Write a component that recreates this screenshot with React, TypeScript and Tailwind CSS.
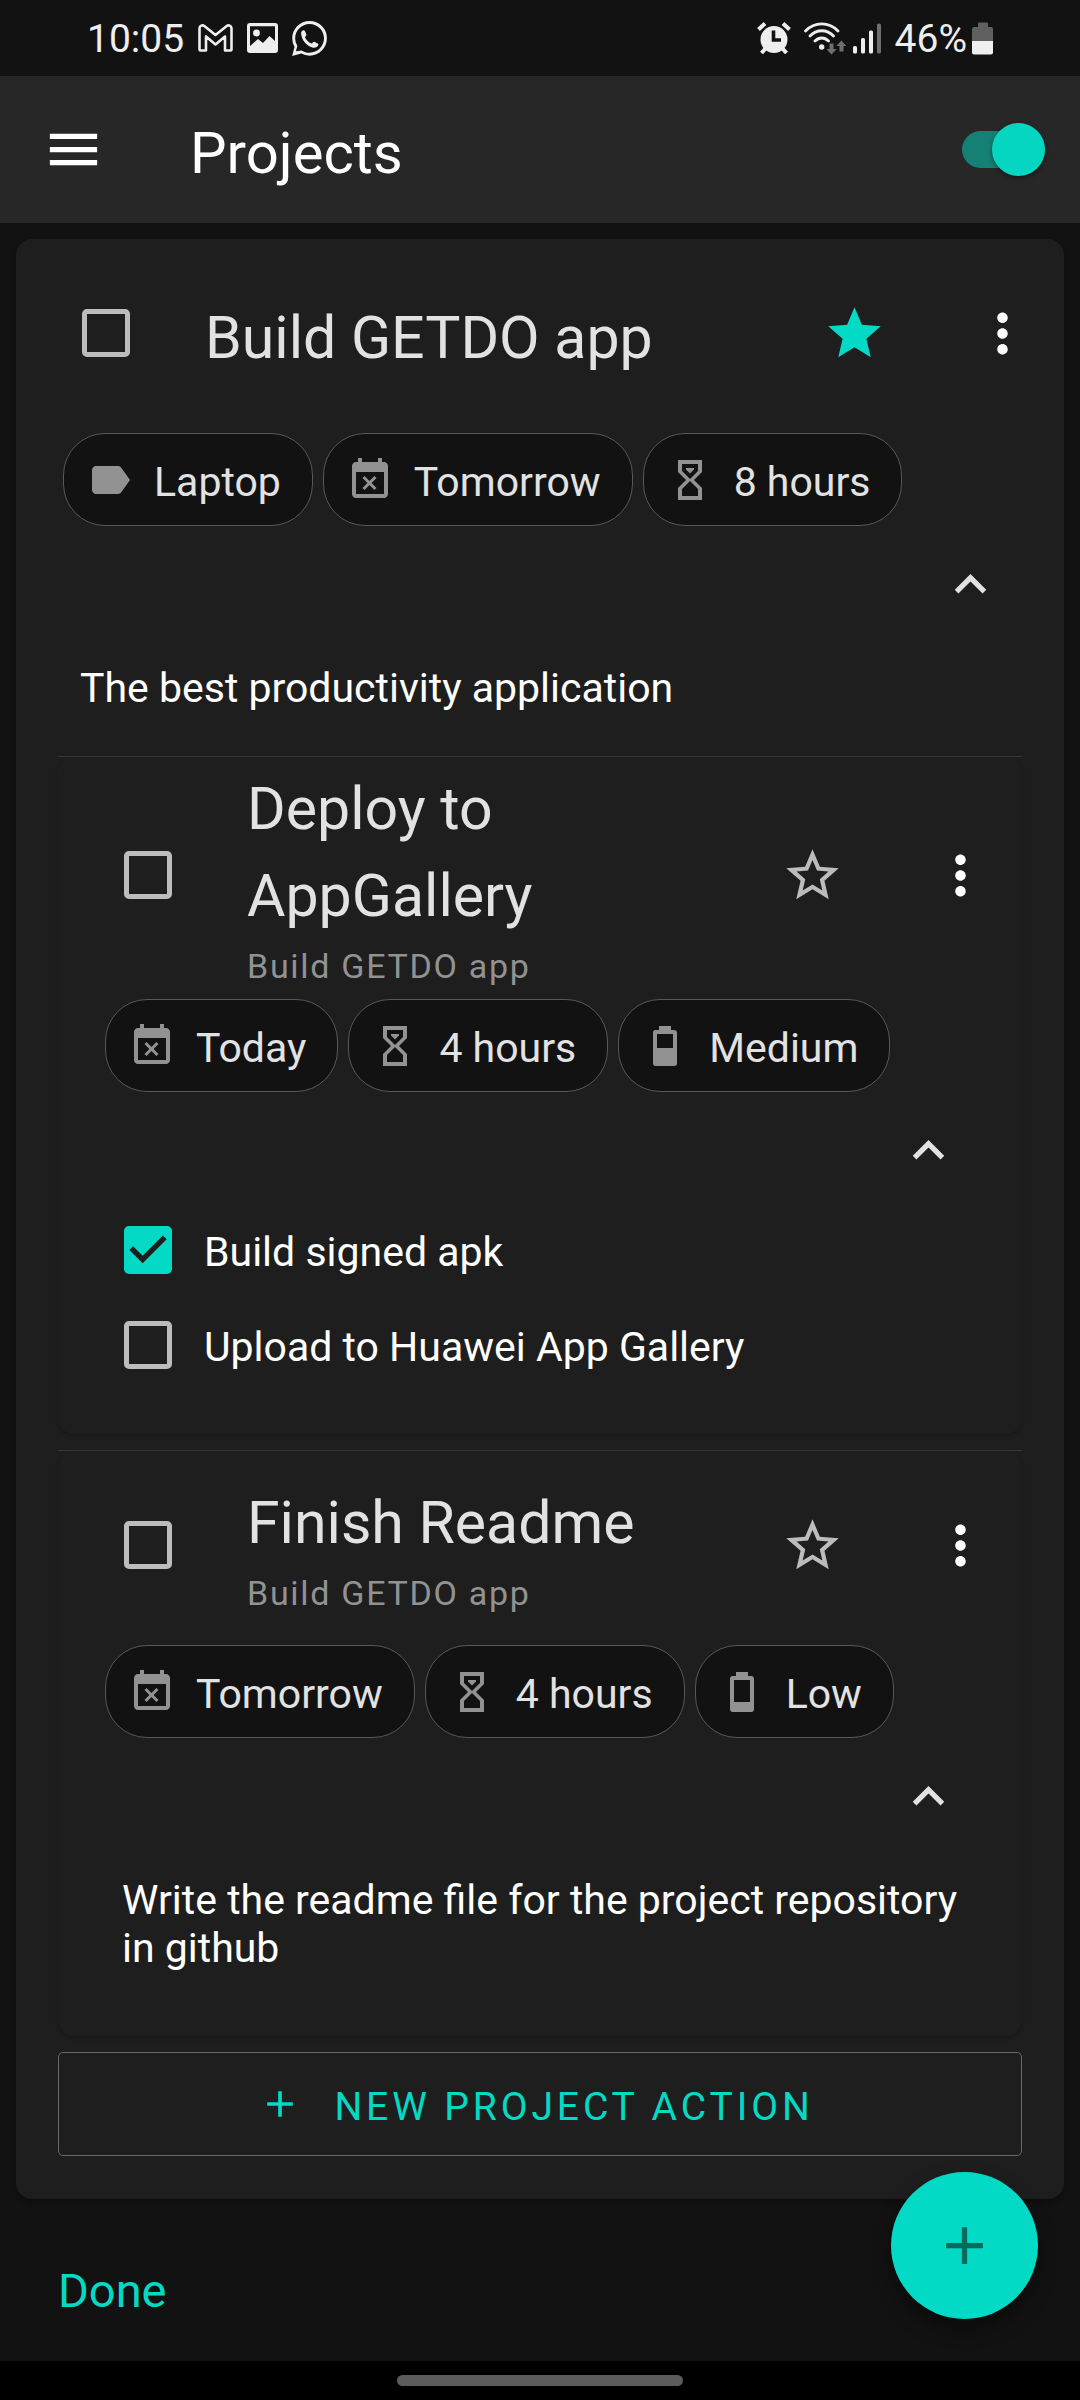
import { useState, type ReactNode } from "react";

const STAR_FILLED =
  "M12 17.27 18.18 21l-1.64-7.03L22 9.24l-7.19-.61L12 2 9.19 8.63 2 9.24l5.46 4.73L5.82 21z";
const STAR_OUTLINE =
  "m22 9.24-7.19-.62L12 2 9.19 8.63 2 9.24l5.46 4.73L5.82 21 12 17.27 18.18 21l-1.63-7.03L22 9.24zM12 15.4l-3.76 2.27 1-4.28-3.32-2.88 4.38-.38L12 6.1l1.71 4.04 4.38.38-3.32 2.88 1 4.28L12 15.4z";
const BATTERY_BODY =
  "M16.67,4H15V2H9V4H7.33A1.33,1.33 0 0,0 6,5.33V20.67C6,21.4 6.6,22 7.33,22H16.67A1.33,1.33 0 0,0 18,20.67V5.33C18,4.6 17.4,4 16.67,4Z";

const CHIP_ICONS = {
  label:
    "M17.63 5.84C17.27 5.33 16.67 5 16 5L5 5.01C3.9 5.01 3 5.9 3 7v10c0 1.1.9 1.99 2 1.99L16 19c.67 0 1.27-.33 1.63-.84L22 12l-4.37-6.16z",
  calendar:
    "M9.31 17l2.44-2.44L14.19 17l1.06-1.06-2.44-2.44 2.44-2.44L14.19 10l-2.44 2.44L9.31 10l-1.06 1.06 2.44 2.44-2.44 2.44L9.31 17zM19 3h-1V1h-2v2H8V1H6v2H5c-1.11 0-1.99.9-1.99 2L3 19c0 1.1.89 2 2 2h14c1.1 0 2-.9 2-2V5c0-1.1-.9-2-2-2zm0 16H5V8h14v11z",
  hourglass:
    "M6,2H18V8L14,12L18,16V22H6V16L10,12L6,8V2M16,16.5L12,12.5L8,16.5V20H16V16.5M12,11.5L16,7.5V4H8V7.5L12,11.5M10,6H14V6.75L12,8.75L10,6.75V6Z",
  batteryMedium: "M16,13H8V6H16Z" + BATTERY_BODY,
  batteryLow: "M16,17H8V6H16Z" + BATTERY_BODY,
};

type ChipData = { icon: keyof typeof CHIP_ICONS; text: string };

function Icon({ d, className }: { d: string; className: string }) {
  return (
    <svg viewBox="0 0 24 24" fill="currentColor" fillRule="evenodd" className={className} aria-hidden="true">
      <path d={d} />
    </svg>
  );
}

function Checkbox({ id, label, initial = false }: { id: string; label?: string; initial?: boolean }) {
  const [checked, setChecked] = useState(initial);
  return (
    <span className="relative size-12 shrink-0">
      <input
        id={id}
        type="checkbox"
        aria-label={label}
        checked={checked}
        onChange={(e) => setChecked(e.target.checked)}
        className="block size-12 appearance-none rounded-[5px] border-[5px] border-[#bcbcbc] checked:border-[#03dac5] checked:bg-[#03dac5]"
      />
      {checked && (
        <svg viewBox="3 3 18 18" className="pointer-events-none absolute inset-0 size-12" aria-hidden="true">
          <path d="M10 17l-5-5 1.41-1.41L10 14.17l7.59-7.59L19 8z" fill="#1e1e1e" />
        </svg>
      )}
    </span>
  );
}

function Item({
  id,
  title,
  parent,
  starred = false,
  chips,
  children,
}: {
  id: string;
  title: string;
  parent?: string;
  starred?: boolean;
  chips: ChipData[];
  children: ReactNode;
}) {
  return (
    <>
      <div className="flex min-h-[188px] items-center pr-[30px] pl-[66px]">
        <Checkbox id={id} label={title} />
        <div className="ml-[75px] flex-1 pt-2">
          <h2 className="text-[59px] leading-[87px] text-[#e2e2e2]">{title}</h2>
          {parent && <p className="text-[34px] leading-[54px] tracking-wider text-[#929292]">{parent}</p>}
        </div>
        <button type="button" aria-label="Star" className={starred ? "text-[#03dac5]" : "text-[#bcbcbc]"}>
          <Icon d={starred ? STAR_FILLED : STAR_OUTLINE} className="size-[63px]" />
        </button>
        <button type="button" aria-label="More" className="ml-[85px] text-white">
          <Icon
            d="M12 8c1.1 0 2-.9 2-2s-.9-2-2-2-2 .9-2 2 .9 2 2 2zm0 2c-1.1 0-2 .9-2 2s.9 2 2 2 2-.9 2-2-.9-2-2-2zm0 6c-1.1 0-2 .9-2 2s.9 2 2 2 2-.9 2-2-.9-2-2-2z"
            className="size-[63px]"
          />
        </button>
      </div>
      <ul className="mt-[6px] flex flex-wrap gap-[10px] px-[47px]">
        {chips.map((chip) => (
          <li
            key={chip.text}
            className="flex h-[93px] items-center rounded-[42px] border border-[#585858] bg-[#121212] pr-[31px] pl-[22px]"
          >
            <Icon d={CHIP_ICONS[chip.icon]} className="size-12 text-[#929292]" />
            <span className="ml-5 pt-1 text-[41px] leading-[48px] text-[#e2e2e2]">{chip.text}</span>
          </li>
        ))}
      </ul>
      <div className="mt-[27px] flex justify-end pr-[62px]">
        <button type="button" aria-label="Collapse" className="text-[#e2e2e2]">
          <Icon d="M12 8l-6 6 1.41 1.41L12 10.83l4.59 4.58L18 14z" className="size-[63px]" />
        </button>
      </div>
      {children}
    </>
  );
}

function StatusBar() {
  return (
    <div className="flex h-[76px] items-center justify-between pr-[87px] pl-[87px] text-[#eeeeee]">
      <div className="flex items-center">
        <span className="pt-0.5 text-[39px] leading-[48px]">10:05</span>
        <svg viewBox="0 0 35 28" className="ml-[14px] h-7 w-[35px]" fill="none" stroke="currentColor" strokeWidth="2.6" strokeLinejoin="round" aria-hidden="true">
          <path d="M1.5 4.5C1.5 1.6 4.4.6 6.6 2.2L17.5 11 28.4 2.2C30.6.6 33.5 1.6 33.5 4.5V25.5a1 1 0 0 1-1 1H27V12.5L17.5 20.5 8 12.5V26.5H2.5a1 1 0 0 1-1-1z" />
        </svg>
        <svg viewBox="0 0 31 30" className="ml-[14px] h-[30px] w-[31px]" fill="currentColor" fillRule="evenodd" aria-hidden="true">
          <path d="M3 0H28a3 3 0 0 1 3 3V27a3 3 0 0 1-3 3H3a3 3 0 0 1-3-3V3A3 3 0 0 1 3 0zM3 3.2V23L11 16l5 4 6.5-7L28 18V3.2z" />
          <circle cx="9.5" cy="10" r="3.4" />
        </svg>
        <svg viewBox="0 0 24 24" className="ml-[14px] size-[35px]" fill="currentColor" aria-hidden="true">
          <path d="M.057 24l1.687-6.163a11.867 11.867 0 0 1-1.587-5.946C.16 5.335 5.495 0 12.05 0a11.817 11.817 0 0 1 8.413 3.488 11.824 11.824 0 0 1 3.48 8.414c-.003 6.557-5.338 11.892-11.893 11.892a11.9 11.9 0 0 1-5.688-1.448L.057 24zm6.597-3.807c1.676.995 3.276 1.591 5.392 1.592 5.448 0 9.886-4.434 9.889-9.885.002-5.462-4.415-9.89-9.881-9.892-5.452 0-9.887 4.434-9.889 9.884a9.82 9.82 0 0 0 1.51 5.26l-.999 3.648 3.978-.607z" />
          <path d="M6.2 8.2c.2-1.2 1-1.9 1.8-1.9.6 0 .8.4 1 .9l.9 2c.2.6-.9 1.5-1 1.9.9 2 2.5 3.5 4.5 4.3.5.1 1.3-1.3 1.9-1.1l2.3 1.1c.5.3.6.7.4 1.3-.4 1.2-2.2 1.9-3.5 1.6C10.5 17.5 6.5 13.5 6.2 8.2z" />
        </svg>
      </div>
      <div className="flex items-center">
        <svg viewBox="0 0 34 32" className="h-8 w-[34px]" aria-hidden="true">
          <g stroke="currentColor" strokeWidth="4">
            <path d="M1.5 7.5 8 1.5M32.5 7.5 26 1.5M4.5 31l4-4.5M29.5 31l-4-4.5" />
          </g>
          <circle cx="17" cy="17.5" r="13.5" fill="currentColor" />
          <path d="M16.5 8.5V18H24" fill="none" stroke="#121212" strokeWidth="3.6" />
        </svg>
        <svg viewBox="0 0 42 33" className="ml-[13px] h-[33px] w-[42px]" fill="none" strokeLinecap="round" aria-hidden="true">
          <g stroke="currentColor" strokeWidth="2.8">
            <path d="M1.5 9C10.5-.5 25-.5 34 9M6 14c6.5-7 17-7 23.5 0M11 19c4-4 9.5-4 13.5 0" />
          </g>
          <circle cx="17.7" cy="25" r="2.7" fill="currentColor" />
          <g fill="#6f6f6f">
            <path d="M25.5 21.5h4V27h3.2L27.5 32.5 22.3 27h3.2z" />
            <path d="M35.5 29.5h4V24h2.7L37.5 18.5 32.3 24h3.2z" />
          </g>
        </svg>
        <svg viewBox="0 0 28 32" className="ml-[7px] h-8 w-7" fill="currentColor" aria-hidden="true">
          <rect x="0" y="24" width="4" height="7.5" rx="1.5" />
          <rect x="8" y="16" width="4" height="15.5" rx="1.5" />
          <rect x="16" y="8.5" width="4" height="23" rx="1.5" />
          <rect x="24" y="1.5" width="4" height="30" rx="1.5" fill="#6f6f6f" />
        </svg>
        <span className="ml-[14px] pt-0.5 text-[39px] leading-[48px]">46%</span>
        <svg viewBox="0 0 21 33" className="ml-[5px] h-[33px] w-[21px]" aria-hidden="true">
          <path d="M6 1.5A1 1 0 0 1 7 .5h8a1 1 0 0 1 1 1V5h3a2 2 0 0 1 2 2v12H0V7a2 2 0 0 1 2-2h4z" fill="#5f5f5f" />
          <path d="M0 19h21v11.5a2 2 0 0 1-2 2H2a2 2 0 0 1-2-2z" fill="currentColor" />
        </svg>
      </div>
    </div>
  );
}

export default function App() {
  const [active, setActive] = useState(true);
  const subCard = "rounded-2xl bg-[#1e1e1e] shadow-[0_2px_4px_rgba(0,0,0,0.2)]";
  const divider = "border-[#373737]";
  return (
    <div className="flex min-h-screen flex-col bg-[#121212] font-['Roboto',sans-serif] text-white">
      <StatusBar />
      <header className="flex h-[147px] items-center bg-[#272727] pr-[35px] pl-[42px]">
        <button type="button" aria-label="Menu">
          <Icon d="M3 18h18v-2H3v2zm0-5h18v-2H3v2zm0-7v2h18V6H3z" className="size-[63px]" />
        </button>
        <h1 className="ml-[85px] flex-1 pt-1.5 text-[58px] leading-[68px]">Projects</h1>
        <input
          type="checkbox"
          role="switch"
          aria-label="Show projects"
          checked={active}
          onChange={(e) => setActive(e.target.checked)}
          className="flex h-[37px] w-[83px] appearance-none items-center rounded-full bg-[#666666] before:size-[53px] before:shrink-0 before:rounded-full before:bg-[#bcbcbc] before:shadow-[0_2px_5px_rgba(0,0,0,0.4)] checked:justify-end checked:bg-[#158074] checked:before:bg-[#05d6c2]"
        />
      </header>

      <main className="flex-1 px-4 pt-4">
        <section className="rounded-2xl bg-[#1e1e1e] pb-[43px] shadow-[0_3px_5px_rgba(0,0,0,0.3)]">
          <Item
            id="project"
            title="Build GETDO app"
            starred
            chips={[
              { icon: "label", text: "Laptop" },
              { icon: "calendar", text: "Tomorrow" },
              { icon: "hourglass", text: "8 hours" },
            ]}
          >
            <p className="px-16 pt-12 pb-11 text-[41px] leading-[48px]">The best productivity application</p>
          </Item>

          <div className="px-[42px]">
            <hr className={divider} />
            <article className={subCard}>
              <Item
                id="deploy"
                title="Deploy to AppGallery"
                parent="Build GETDO app"
                chips={[
                  { icon: "calendar", text: "Today" },
                  { icon: "hourglass", text: "4 hours" },
                  { icon: "batteryMedium", text: "Medium" },
                ]}
              >
                <ul className="mt-5 pb-[42px] pl-[66px]">
                  {[
                    { id: "apk", text: "Build signed apk", done: true },
                    { id: "upload", text: "Upload to Huawei App Gallery", done: false },
                  ].map((step) => (
                    <li key={step.id} className="flex h-[95px] items-center">
                      <Checkbox id={step.id} initial={step.done} />
                      <label htmlFor={step.id} className="pt-1 pl-8 text-[41px] leading-[48px]">
                        {step.text}
                      </label>
                    </li>
                  ))}
                </ul>
              </Item>
            </article>

            <hr className={`mt-4 ${divider}`} />
            <article className={subCard}>
              <Item
                id="readme"
                title="Finish Readme"
                parent="Build GETDO app"
                chips={[
                  { icon: "calendar", text: "Tomorrow" },
                  { icon: "hourglass", text: "4 hours" },
                  { icon: "batteryLow", text: "Low" },
                ]}
              >
                <p className="px-16 pt-12 pb-16 text-[41px] leading-[48px]">
                  Write the readme file for the project repository in github
                </p>
              </Item>
            </article>

            <button
              type="button"
              className="mt-4 flex h-[104px] w-full items-center justify-center rounded-[5px] border border-[#6a6a6a] pr-2 text-[39px] leading-[48px] tracking-widest text-[#03dac5]"
            >
              <Icon d="M19 13h-6v6h-2v-6H5v-2h6V5h2v6h6v2z" className="mr-8 size-11" />
              <span className="pt-1.5">NEW PROJECT ACTION</span>
            </button>
          </div>
        </section>
        <h2 className="px-[42px] pt-16 pb-10 text-[47px] leading-[56px] text-[#03dac5]">Done</h2>
      </main>

      <button
        type="button"
        aria-label="Add project"
        className="fixed right-[42px] bottom-[81px] flex size-[147px] items-center justify-center rounded-full bg-[#03dac5] text-[#066a5c] shadow-[0_10px_20px_rgba(0,0,0,0.4)]"
      >
        <Icon d="M19 13h-6v6h-2v-6H5v-2h6V5h2v6h6v2z" className="size-[63px]" />
      </button>

      <footer className="flex h-[39px] justify-center bg-black pt-[14px]">
        <div className="h-[11px] w-[286px] rounded-full bg-[#5c5c5c]" />
      </footer>
    </div>
  );
}
